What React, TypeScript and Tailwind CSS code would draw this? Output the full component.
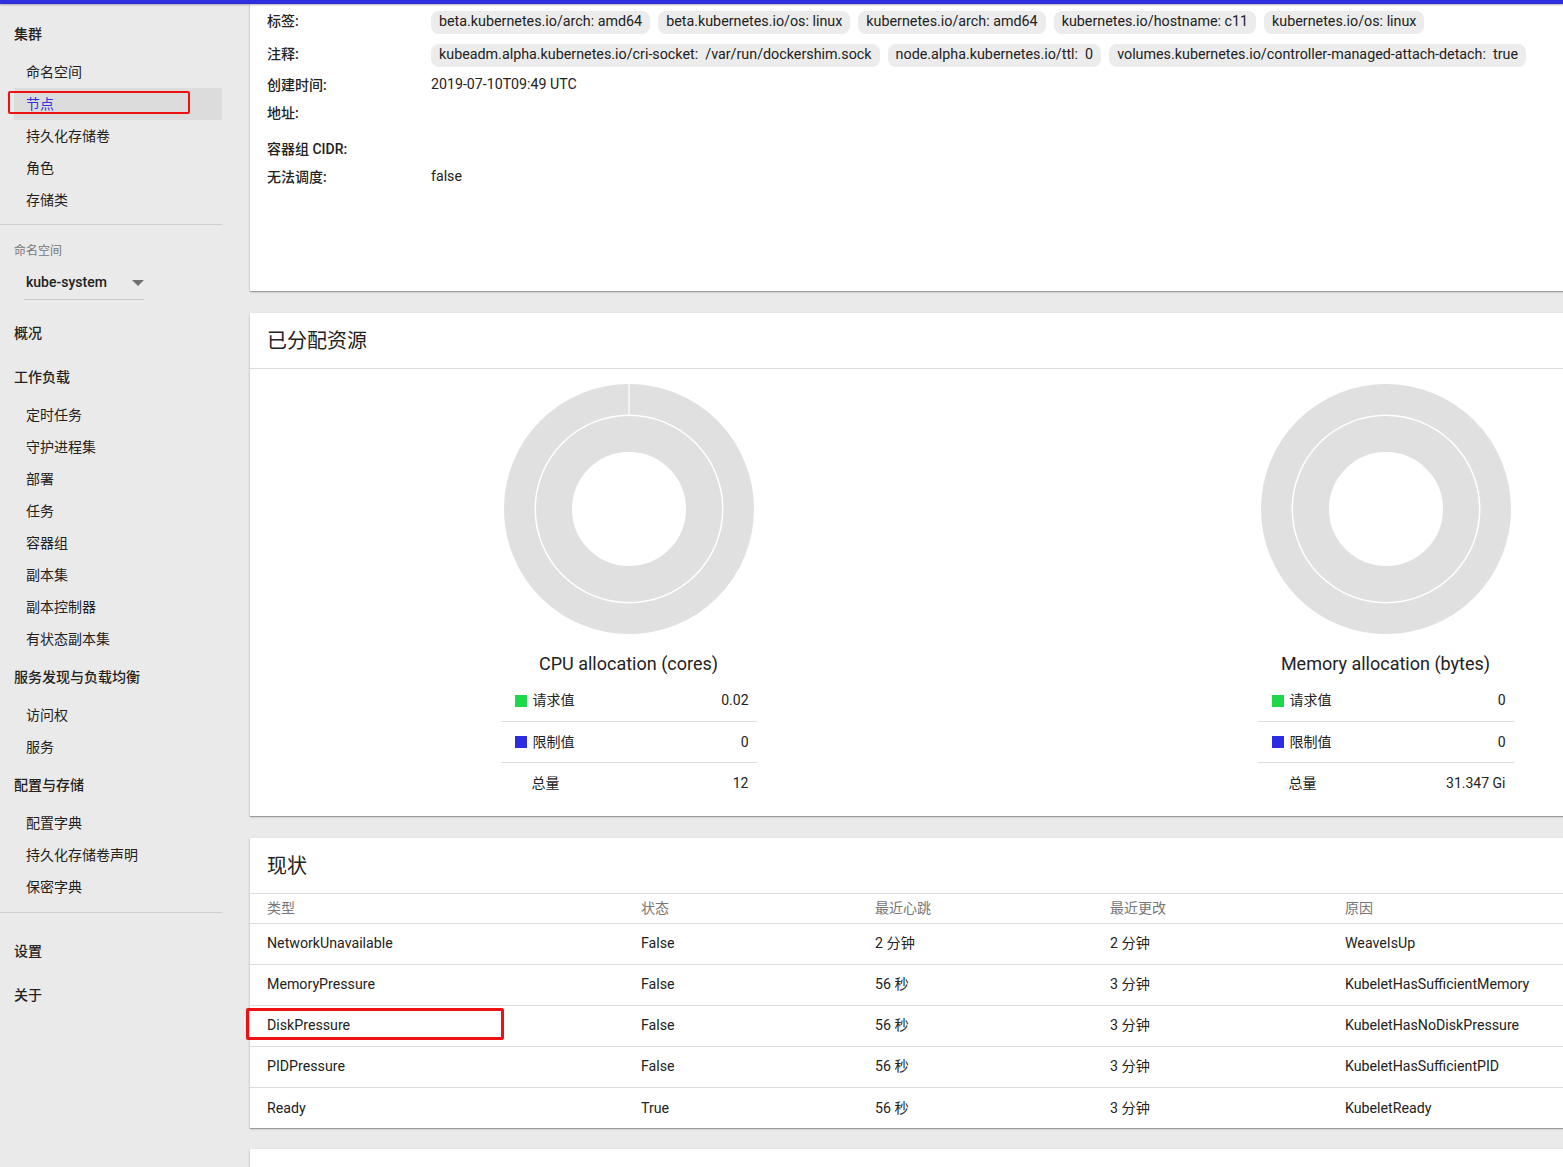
// Kubernetes dashboard – node detail page (节点), scrolled to resources/conditions.
const navGroups: { title: string; items: string[] }[] = [
  { title: "概况", items: [] },
  { title: "工作负载", items: ["定时任务", "守护进程集", "部署", "任务", "容器组", "副本集", "副本控制器", "有状态副本集"] },
  { title: "服务发现与负载均衡", items: ["访问权", "服务"] },
  { title: "配置与存储", items: ["配置字典", "持久化存储卷声明", "保密字典"] },
];

const labels = [
  "beta.kubernetes.io/arch: amd64",
  "beta.kubernetes.io/os: linux",
  "kubernetes.io/arch: amd64",
  "kubernetes.io/hostname: c11",
  "kubernetes.io/os: linux",
];

const annotations = [
  "kubeadm.alpha.kubernetes.io/cri-socket:  /var/run/dockershim.sock",
  "node.alpha.kubernetes.io/ttl:  0",
  "volumes.kubernetes.io/controller-managed-attach-detach:  true",
];

const conditions = [
  { type: "NetworkUnavailable", status: "False", beat: "2 分钟", change: "2 分钟", reason: "WeaveIsUp" },
  { type: "MemoryPressure", status: "False", beat: "56 秒", change: "3 分钟", reason: "KubeletHasSufficientMemory" },
  { type: "DiskPressure", status: "False", beat: "56 秒", change: "3 分钟", reason: "KubeletHasNoDiskPressure", marked: true },
  { type: "PIDPressure", status: "False", beat: "56 秒", change: "3 分钟", reason: "KubeletHasSufficientPID" },
  { type: "Ready", status: "True", beat: "56 秒", change: "3 分钟", reason: "KubeletReady" },
];

function NavHeader({ children }: { children: string }) {
  return <div className="h-[44px] flex items-center pl-[14px] text-[14px] font-medium text-[#222]">{children}</div>;
}

function NavItem({ children, active }: { children: string; active?: boolean }) {
  return (
    <div className="relative h-[32px]">
      <div className={`ml-[14px] h-full flex items-center pl-[12px] text-[14px] ${active ? "bg-[#dcdcdc] text-[#3333dd]" : "text-[#222]"}`}>
        {children}
      </div>
      {active && <div className="absolute left-[8px] top-[3px] w-[182px] h-[23px] border-2 border-[#ee1111] rounded-[2px]" />}
    </div>
  );
}

function Sidebar() {
  return (
    <div className="w-[222px] shrink-0 pt-[8px]">
      <NavHeader>集群</NavHeader>
      {["命名空间", "节点", "持久化存储卷", "角色", "存储类"].map((t) => (
        <NavItem key={t} active={t === "节点"}>{t}</NavItem>
      ))}
      <div className="mt-[8px] border-t border-[#cfcfcf]" />
      <div className="pl-[14px] pt-[18px] text-[12px] leading-[16px] text-[#777]">命名空间</div>
      <div className="ml-[24px] w-[120px] h-[41px] pt-[7px] flex items-center justify-between border-b border-[#c8c8c8] pl-[2px] pr-[2px]">
        <span className="text-[14px] font-medium text-[#222]">kube-system</span>
        <svg width="12" height="6" viewBox="0 0 12 6" className="mr-[-2px]">
          <path d="M0 0h12L6 6z" fill="#707070" />
        </svg>
      </div>
      <div className="h-[11px]" />
      {navGroups.map((g) => (
        <div key={g.title}>
          <NavHeader>{g.title}</NavHeader>
          {g.items.map((i) => (
            <NavItem key={i}>{i}</NavItem>
          ))}
        </div>
      ))}
      <div className="mt-[9px] mb-[16px] border-t border-[#cfcfcf]" />
      <NavHeader>设置</NavHeader>
      <NavHeader>关于</NavHeader>
    </div>
  );
}

function Chip({ children }: { children: string }) {
  return (
    <span className="h-[23px] mt-[2px] px-[8px] flex items-center rounded-[8px] bg-[#ececec] text-[14.3px] text-[#222] whitespace-pre">
      {children}
    </span>
  );
}

function DetailRow({ label, h, children, className = "" }: { label: string; h: string; children?: React.ReactNode; className?: string }) {
  return (
    <div className={`flex items-center ${h} ${className}`}>
      <div className="w-[164px] shrink-0 text-[14px] font-medium text-[#222]">{label}</div>
      <div className="flex items-center gap-[8px] text-[14.2px] text-[#222]">{children}</div>
    </div>
  );
}

const card = "w-[1514px] shrink-0 bg-white shadow-[0_1px_1px_rgba(0,0,0,0.28),0_1px_3px_rgba(0,0,0,0.12)]";

function Donut({ divider }: { divider?: boolean }) {
  return (
    <svg width="250" height="250" viewBox="0 0 250 250">
      <circle cx="125" cy="125" r="109.75" fill="none" stroke="#e0e0e0" strokeWidth="30.5" />
      <circle cx="125" cy="125" r="75" fill="none" stroke="#e0e0e0" strokeWidth="36" />
      {divider && <line x1="125" y1="0" x2="125" y2="31" stroke="#ffffff" strokeWidth="1.2" />}
    </svg>
  );
}

function Chart({ title, request, limit, total, divider }: { title: string; request: string; limit: string; total: string; divider?: boolean }) {
  return (
    <div className="w-1/2 flex flex-col items-center">
      <Donut divider={divider} />
      <div className="mt-[18px] h-[24px] leading-[24px] text-[18px] text-[#222]">{title}</div>
      <div className="mt-[4px] w-[256px] text-[14px] text-[#222]">
        <div className="h-[42px] flex items-center justify-between pl-[14px] pr-[8px] border-b border-[#dddddd]">
          <span className="flex items-center gap-[6px]">
            <span className="w-[12px] h-[12px] bg-[#1ed84b]" />
            请求值
          </span>
          <span>{request}</span>
        </div>
        <div className="h-[41px] flex items-center justify-between pl-[14px] pr-[8px] border-b border-[#dddddd]">
          <span className="flex items-center gap-[6px]">
            <span className="w-[12px] h-[12px] bg-[#2c2ce0]" />
            限制值
          </span>
          <span>{limit}</span>
        </div>
        <div className="h-[40px] flex items-center justify-between pl-[31px] pr-[8px]">
          <span>总量</span>
          <span>{total}</span>
        </div>
      </div>
    </div>
  );
}

export default function App() {
  return (
    <div className="w-[1563px] h-[1167px] overflow-hidden bg-[#eaeaea] font-['Roboto','Noto_Sans_CJK_SC',sans-serif]">
      <div className="h-[4px] bg-[#2f2fdf] shadow-[0_1px_2px_rgba(0,0,0,0.3)] relative z-10" />
      <div className="flex">
        <Sidebar />
        <div className="pl-[28px] flex flex-col">
          {/* node details */}
          <div className={`${card} h-[287px] pl-[17px]`}>
            <DetailRow label="标签:" h="h-[34px]">
              {labels.map((l) => (
                <Chip key={l}>{l}</Chip>
              ))}
            </DetailRow>
            <DetailRow label="注释:" h="h-[32px]">
              {annotations.map((a) => (
                <Chip key={a}>{a}</Chip>
              ))}
            </DetailRow>
            <DetailRow label="创建时间:" h="h-[30px]">2019-07-10T09:49 UTC</DetailRow>
            <DetailRow label="地址:" h="h-[26px]" />
            <DetailRow label="容器组 CIDR:" h="h-[38px]" className="mt-[4px]" />
            <DetailRow label="无法调度:" h="h-[18px]">false</DetailRow>
          </div>

          {/* allocated resources */}
          <div className={`${card} mt-[22px] h-[503px]`}>
            <div className="h-[56px] flex items-center pl-[17px] border-b border-[#dddddd] text-[20px] text-[#222]">已分配资源</div>
            <div className="flex pt-[15px]">
              <Chart title="CPU allocation (cores)" request="0.02" limit="0" total="12" divider />
              <Chart title="Memory allocation (bytes)" request="0" limit="0" total="31.347 Gi" />
            </div>
          </div>

          {/* conditions */}
          <div className={`${card} mt-[22px] h-[290px]`}>
            <div className="h-[56px] flex items-center pl-[17px] border-b border-[#dddddd] text-[20px] text-[#222]">现状</div>
            <div className="h-[30px] flex items-center pl-[17px] border-b border-[#dddddd] text-[14px] text-[#777]">
              <div className="w-[374px]">类型</div>
              <div className="w-[234px]">状态</div>
              <div className="w-[235px]">最近心跳</div>
              <div className="w-[235px]">最近更改</div>
              <div>原因</div>
            </div>
            {conditions.map((c, i) => (
              <div
                key={c.type}
                className={`relative h-[41px] flex items-center pl-[17px] text-[14.2px] text-[#222] ${i < conditions.length - 1 ? "border-b border-[#dddddd]" : ""}`}
              >
                <div className="w-[374px]">{c.type}</div>
                <div className="w-[234px]">{c.status}</div>
                <div className="w-[235px]">{c.beat}</div>
                <div className="w-[235px]">{c.change}</div>
                <div>{c.reason}</div>
                {c.marked && <div className="absolute left-[-4px] top-[2px] w-[258px] h-[32px] border-[3px] border-[#ee1111] rounded-[2px]" />}
              </div>
            ))}
          </div>

          <div className={`${card} mt-[21px] h-[120px]`} />
        </div>
      </div>
    </div>
  );
}
